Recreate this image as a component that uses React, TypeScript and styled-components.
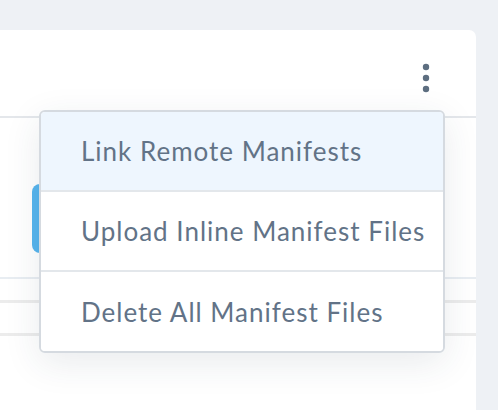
import styled, { createGlobalStyle } from "styled-components";

const GlobalStyle = createGlobalStyle`
  html, body {
    margin: 0;
    padding: 0;
    background: #eef1f5;
    font-family: "Lato", "Open Sans", sans-serif;
  }
`;

const Page = styled.div`
  width: 498px;
  height: 410px;
  padding-top: 30px;
  box-sizing: border-box;
  overflow: hidden;
`;

const Card = styled.div`
  position: relative;
  width: 486px;
  height: 380px;
  margin-left: -10px;
  background: #ffffff;
  border-top-right-radius: 7px;
`;

const Header = styled.div`
  height: 86px;
  border-bottom: 2px solid #e4e7eb;
  display: flex;
  align-items: center;
  justify-content: flex-end;
  padding-right: 40px;
`;

const KebabButton = styled.button`
  border: none;
  background: transparent;
  padding: 0;
  width: 20px;
  height: 32px;
  display: flex;
  align-items: center;
  justify-content: center;
  margin-top: 9px;
  cursor: pointer;
`;

const Body = styled.div`
  padding-top: 66px;
  padding-left: 42px;
`;

const PrimaryButton = styled.div`
  width: 120px;
  height: 69px;
  border-radius: 8px;
  background: #57b5ee;
`;

const Rows = styled.div`
  margin-top: 24px;
  margin-left: -42px;
`;

const Row = styled.div<{ $h: number; $line: string; $w: number }>`
  height: ${({ $h }) => $h}px;
  border-top: ${({ $w }) => $w}px solid ${({ $line }) => $line};
`;

const Menu = styled.div`
  position: absolute;
  top: 80px;
  right: 31px;
  width: 406px;
  box-sizing: border-box;
  background: #ffffff;
  border: 2px solid #d5dae0;
  border-radius: 6px;
  overflow: hidden;
  box-shadow: 0 10px 36px rgba(40, 55, 75, 0.1);
`;

const MenuItem = styled.div<{ $active?: boolean }>`
  height: 78px;
  display: flex;
  align-items: center;
  padding-left: 40px;
  font-size: 26px;
  letter-spacing: 1px;
  color: #627387;
  background: ${({ $active }) => ($active ? "#eef6fe" : "#ffffff")};
  border-bottom: 2px solid #e3e7eb;
  &:last-child {
    border-bottom: none;
    height: 79px;
  }
`;

const Kebab = () => (
  <svg width="8" height="30" viewBox="0 0 8 30">
    <circle cx="4" cy="4" r="3.2" fill="#5d6e80" />
    <circle cx="4" cy="15" r="3.2" fill="#5d6e80" />
    <circle cx="4" cy="26" r="3.2" fill="#5d6e80" />
  </svg>
);

const items = [
  "Link Remote Manifests",
  "Upload Inline Manifest Files",
  "Delete All Manifest Files",
];

export default function App() {
  return (
    <Page>
      <GlobalStyle />
      <Card>
        <Header>
          <KebabButton>
            <Kebab />
          </KebabButton>
        </Header>
        <Body>
          <PrimaryButton />
          <Rows>
            <Row $h={21} $line="#e8edf2" $w={2} />
            <Row $h={30} $line="#ececec" $w={3} />
            <Row $h={40} $line="#ececec" $w={3} />
          </Rows>
        </Body>
        <Menu>
          {items.map((label, i) => (
            <MenuItem key={label} $active={i === 0}>
              {label}
            </MenuItem>
          ))}
        </Menu>
      </Card>
    </Page>
  );
}
